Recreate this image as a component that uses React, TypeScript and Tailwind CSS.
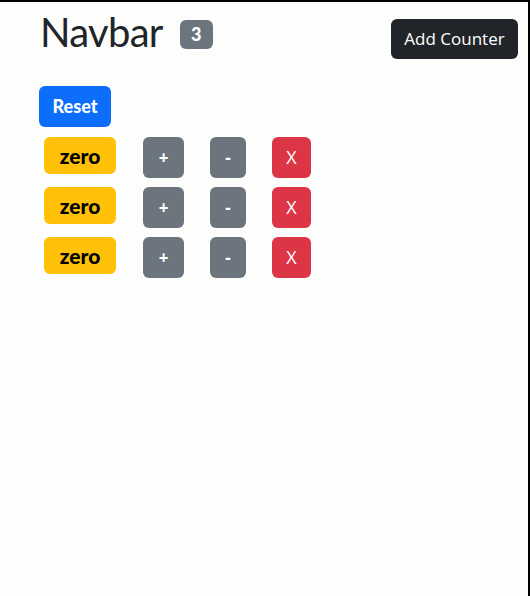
import React from "react";

const rows = [0, 1, 2];

export default function App() {
  return (
    <div className="w-[530px] h-[596px] bg-[#fdfdfc] border-t-2 border-r-2 border-black box-border overflow-hidden" style={{ fontFamily: '"Open Sans", "Noto Sans", sans-serif' }}>
      <div className="flex items-start justify-between pt-[6px] pr-[10px]">
        <div className="flex items-start pl-[40px]">
          <h1 className="text-[40px] leading-[48px] font-normal tracking-[-0.7px] text-[#212529]" style={{ fontFamily: "Lato, sans-serif" }}>
            Navbar
          </h1>
          <span className="ml-[17px] mt-[12px] w-[33px] h-[29px] rounded-[6px] bg-[#6c757d] text-white text-[18px] font-black flex items-center justify-center" style={{ fontFamily: "Lato, sans-serif" }}>
            3
          </span>
        </div>
        <button className="mt-[11px] w-[127px] h-[40px] rounded-[6px] bg-[#212529] text-white text-[17px] flex items-center justify-center">
          Add Counter
        </button>
      </div>
      <div className="pl-[39px] pt-[27px]">
        <button className="w-[72px] h-[41px] rounded-[6px] bg-[#0d6efd] text-white text-[18px] font-black flex items-center justify-center" style={{ fontFamily: "Lato, sans-serif" }}>
          Reset
        </button>
      </div>
      <div className="flex flex-col gap-[9px] pl-[44px] pt-[10px]">
        {rows.map((r) => (
          <div key={r} className="flex items-start">
            <span className="w-[72px] h-[37px] rounded-[6px] bg-[#ffc107] text-black text-[21px] font-black flex items-center justify-center" style={{ fontFamily: "Lato, sans-serif" }}>
              zero
            </span>
            <button className="ml-[27px] w-[41px] h-[41px] rounded-[6px] bg-[#6c757d] text-white text-[17px] font-bold flex items-center justify-center">
              +
            </button>
            <button className="ml-[26px] w-[36px] h-[41px] rounded-[6px] bg-[#6c757d] text-white text-[17px] font-bold flex items-center justify-center">
              -
            </button>
            <button className="ml-[26px] w-[39px] h-[41px] rounded-[6px] bg-[#dc3545] text-white text-[18px] flex items-center justify-center">
              X
            </button>
          </div>
        ))}
      </div>
    </div>
  );
}
